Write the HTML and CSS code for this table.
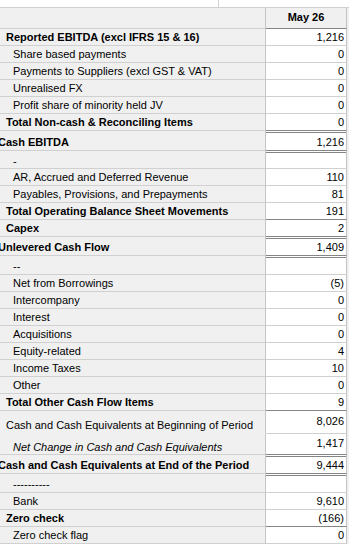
FILE: index.html
```html
<!DOCTYPE html>
<html>
<head>
<meta charset="utf-8">
<link rel="stylesheet" href="styles.css">
</head>
<body>
<div class="sheet">
  <div class="top"><div class="top-cell"></div></div>
  <div class="row hdr"><div class="lab"></div><div class="val">May 26</div><div class="fill"></div></div>

  <div class="row"><div class="lab l1 b">Reported EBITDA (excl IFRS 15 &amp; 16)</div><div class="val">1,216</div><div class="fill"></div></div>
  <div class="row"><div class="lab l2">Share based payments</div><div class="val">0</div><div class="fill"></div></div>
  <div class="row"><div class="lab l2">Payments to Suppliers (excl GST &amp; VAT)</div><div class="val">0</div><div class="fill"></div></div>
  <div class="row"><div class="lab l2">Unrealised FX</div><div class="val">0</div><div class="fill"></div></div>
  <div class="row"><div class="lab l2">Profit share of minority held JV</div><div class="val">0</div><div class="fill"></div></div>
  <div class="row"><div class="lab l1 b">Total Non-cash &amp; Reconciling Items</div><div class="val dk">0</div><div class="fill"></div></div>
  <div class="row dtop h20"><div class="lab l0 b"><span>Cash EBITDA</span></div><div class="val dk">1,216</div><div class="fill"></div></div>
  <div class="row dtop h18"><div class="lab l2">-</div><div class="val"></div><div class="fill"></div></div>
  <div class="row"><div class="lab l2">AR, Accrued and Deferred Revenue</div><div class="val">110</div><div class="fill"></div></div>
  <div class="row"><div class="lab l2">Payables, Provisions, and Prepayments</div><div class="val">81</div><div class="fill"></div></div>
  <div class="row"><div class="lab l1 b">Total Operating Balance Sheet Movements</div><div class="val dk">191</div><div class="fill"></div></div>
  <div class="row"><div class="lab l1 b">Capex</div><div class="val dk">2</div><div class="fill"></div></div>
  <div class="row dtop h19"><div class="lab l0 b"><span>Unlevered Cash Flow</span></div><div class="val dk">1,409</div><div class="fill"></div></div>
  <div class="row dtop h19"><div class="lab l2">--</div><div class="val"></div><div class="fill"></div></div>
  <div class="row"><div class="lab l2">Net from Borrowings</div><div class="val">(5)</div><div class="fill"></div></div>
  <div class="row"><div class="lab l2">Intercompany</div><div class="val">0</div><div class="fill"></div></div>
  <div class="row"><div class="lab l2">Interest</div><div class="val">0</div><div class="fill"></div></div>
  <div class="row"><div class="lab l2">Acquisitions</div><div class="val">0</div><div class="fill"></div></div>
  <div class="row"><div class="lab l2">Equity-related</div><div class="val">4</div><div class="fill"></div></div>
  <div class="row"><div class="lab l2">Income Taxes</div><div class="val">10</div><div class="fill"></div></div>
  <div class="row"><div class="lab l2">Other</div><div class="val">0</div><div class="fill"></div></div>
  <div class="row"><div class="lab l1 b">Total Other Cash Flow Items</div><div class="val dk">9</div><div class="fill"></div></div>
  <div class="row h23"><div class="lab l1 noline begin">Cash and Cash Equivalents at Beginning of Period</div><div class="val begin-v">8,026</div><div class="fill"></div></div>
  <div class="row h21"><div class="lab l2 it change">Net Change in Cash and Cash Equivalents</div><div class="val dk change-v">1,417</div><div class="fill"></div></div>
  <div class="row dtop h19"><div class="lab l0 b"><span>Cash and Cash Equivalents at End of the Period</span></div><div class="val dk">9,444</div><div class="fill"></div></div>
  <div class="row dtop h19"><div class="lab l2">----------</div><div class="val"></div><div class="fill"></div></div>
  <div class="row"><div class="lab l2">Bank</div><div class="val">9,610</div><div class="fill"></div></div>
  <div class="row"><div class="lab l1 b">Zero check</div><div class="val dk">(166)</div><div class="fill"></div></div>
  <div class="row"><div class="lab l2">Zero check flag</div><div class="val">0</div><div class="fill"></div></div>
</div>
</body>
</html>
```
FILE: styles.css
```css
html, body {
  margin: 0;
  padding: 0;
  background: #ffffff;
}

body {
  font-family: "Liberation Sans", Arial, sans-serif;
  font-size: 11px;
  color: #000000;
  overflow: hidden;
}

.sheet {
  width: 349px;
}

.top {
  height: 8px;
  box-sizing: border-box;
  border-bottom: 1px solid #d0d0d0;
  display: flex;
}

.top-cell {
  width: 219px;
  box-sizing: border-box;
  border-right: 1px solid #d0d0d0;
}

.row {
  display: flex;
  height: 17px;
  line-height: 16px;
}

.row.h18 { height: 18px; }
.row.h19 { height: 19px; }
.row.h20 { height: 20px; }
.row.h21 { height: 21px; }
.row.h23 { height: 23px; }

.lab,
.val {
  box-sizing: border-box;
  display: flex;
  align-items: center;
  white-space: nowrap;
}

.lab {
  flex: 0 0 266px;
  background: #f0f0f0;
  border-bottom: 1px solid #d0d0d0;
  border-right: 1px solid #c4c4c4;
}

.val {
  flex: 0 0 81px;
  background: #ffffff;
  border-bottom: 1px solid #d0d0d0;
  border-right: 1px solid #c4c4c4;
  justify-content: flex-end;
  padding-right: 2px;
}

.fill {
  flex: 0 0 2px;
  background: #f0f0f0;
}

.val.dk {
  border-bottom-color: #858585;
}

.hdr {
  height: 21px;
}

.hdr .lab {
  border-bottom-color: #d0d0d0;
  padding-bottom: 2px;
}

.hdr .val {
  background: #f0f0f0;
  border-bottom-color: #858585;
  justify-content: center;
  font-weight: bold;
  padding-right: 0;
  padding-bottom: 2px;
}

.dtop .lab {
  padding-top: 2px;
}

.dtop .val {
  padding-top: 2px;
  box-shadow: inset 0 1px 0 #ffffff, inset 0 2px 0 #858585;
}

.l0 { padding-left: 0; }
.l0 span { margin-left: -2px; }
.l1 { padding-left: 6px; }
.l2 { padding-left: 13px; }

.b { font-weight: bold; }
.it { font-style: italic; }

.noline {
  border-bottom-color: #f0f0f0;
}

.begin { padding-top: 5px; }
.begin-v { padding-top: 0; padding-bottom: 2px; }
.change { padding-top: 5px; }
.change-v { padding-bottom: 2px; }
```
